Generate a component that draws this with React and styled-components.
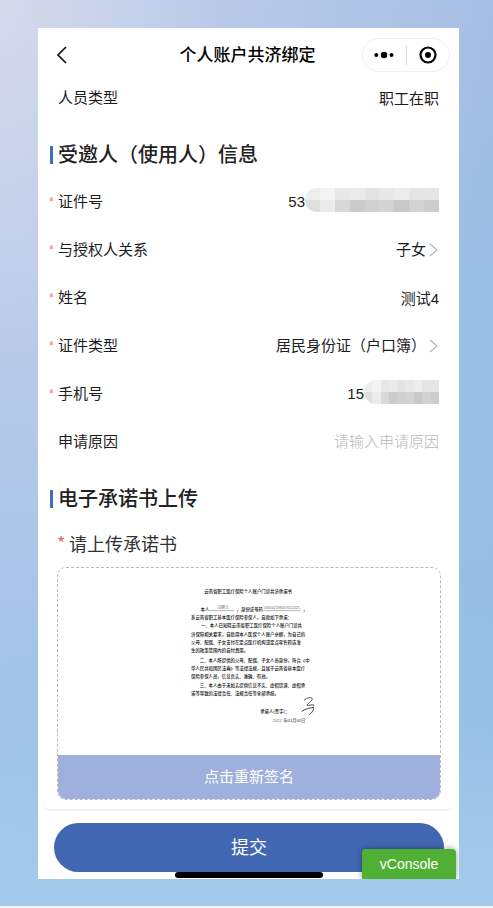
import { useState } from 'react';
import styled, { createGlobalStyle } from 'styled-components';

const GlobalStyle = createGlobalStyle`
  * {
    box-sizing: border-box;
  }

  body {
    margin: 0;
    font-family: "Liberation Sans", "Noto Sans CJK SC", sans-serif;
    color: #1c1c1c;
  }

  button, input, select {
    font-family: inherit;
    color: inherit;
    border: none;
    margin: 0;
    padding: 0;
    background: none;
  }
`;

const Page = styled.main`
  padding: 28px 34px 27px 38px;
  border-bottom: 2px solid #edf5fb;
  background:
    radial-gradient(ellipse 100% 95% at top left, rgba(217, 220, 236, 0.95), rgba(190, 204, 234, 0.8) 45%, rgba(180, 200, 232, 0)),
    linear-gradient(180deg, #a6bfe3 0%, #98bee5 40%, #96bfe6 75%, #a4cbeb 100%);
`;

const Phone = styled.div`
  position: relative;
  background: #fff;
  overflow: hidden;
`;

const Header = styled.header`
  display: grid;
  grid-template-columns: 80px 1fr 88px;
  align-items: center;
  height: 46px;
  padding: 8px 9px 0 15px;
`;

const BackButton = styled.button`
  display: flex;
  width: 24px;
  height: 24px;
  align-items: center;
`;

const Title = styled.h1`
  margin: 0;
  padding-top: 2px;
  font-size: 17px;
  line-height: 24px;
  font-weight: 500;
  text-align: center;
  white-space: nowrap;
  color: #000;
`;

const Capsule = styled.div`
  display: flex;
  align-items: center;
  height: 34px;
  border: 1px solid #f0f0f0;
  border-radius: 17px;
`;

const CapsuleButton = styled.button`
  display: flex;
  flex: 1;
  height: 20px;
  align-items: center;
  justify-content: center;

  & + & {
    border-left: 1px solid #dcdcdc;
  }
`;

const Card = styled.form`
  margin: 0 4px;
  padding: 0 16px 9px 7px;
  border-radius: 0 0 8px 8px;
  box-shadow: 0 3px 3px -2px rgba(0, 0, 0, 0.1);
`;

const Row = styled.div`
  display: flex;
  align-items: center;
  height: 48px;
  font-size: 15px;
  line-height: 20px;
`;

const Star = styled.span`
  flex: none;
  width: ${(props) => (props.$large ? '11px' : '9px')};
  font-size: ${(props) => (props.$large ? '16px' : '12px')};
  line-height: 18px;
  color: ${(props) => (props.$large ? '#d05a50' : '#dc8585')};
`;

const Label = styled.label`
  flex: none;
  white-space: nowrap;
`;

const ValueInput = styled.input`
  flex: 1;
  min-width: 0;
  height: 26px;
  padding-bottom: 2px;
  font-size: 15px;
  text-align: right;
  outline: none;

  &::placeholder {
    color: #b8b8b8;
    font-weight: 300;
    opacity: 1;
  }
`;

const ValueSelect = styled.select`
  flex: 1;
  min-width: 0;
  height: 26px;
  padding-bottom: 2px;
  font-size: 15px;
  text-align-last: right;
  appearance: none;
  outline: none;
`;

const SectionTitle = styled.h2`
  display: flex;
  align-items: center;
  height: 56px;
  margin: 0;
  padding: 10px 0 0 1px;
  font-size: 20px;
  line-height: 28px;
  font-weight: 500;
  color: #222;

  &::before {
    content: '';
    width: 3px;
    height: 18px;
    margin-right: 5px;
    background: #3f70bb;
  }
`;

const UploadLabel = styled.div`
  display: flex;
  align-items: center;
  height: 45px;
  padding: 0 0 3px 9px;
  font-size: 18px;
  color: #333;
`;

const UploadBox = styled.div`
  display: flex;
  flex-direction: column;
  height: 233px;
  margin: 0 -2px 0 8px;
  border: 1px dashed #b9b9c2;
  border-radius: 9px;
  overflow: hidden;
`;

const Preview = styled.div`
  flex: 1;
  display: flex;
  justify-content: center;
  padding-top: 15px;
`;

const ResignButton = styled.button`
  height: 44px;
  padding-bottom: 3px;
  background: #9fb0dc;
  color: #fff;
  font-size: 15px;
`;

const Footer = styled.footer`
  padding: 14px 15px 1px 16px;
`;

const SubmitButton = styled.button`
  display: block;
  width: 100%;
  height: 49px;
  padding-bottom: 3px;
  border-radius: 25px;
  background: #4267b2;
  color: #fff;
  font-size: 18px;
`;

const HomeBar = styled.div`
  width: 148px;
  height: 6px;
  margin: 0 auto;
  border-radius: 3px;
  background: #000;
`;

/* Floating debug switch, sits over the footer */
const ConsoleButton = styled.button`
  position: absolute;
  right: 3px;
  bottom: 0;
  width: 94px;
  height: 30px;
  border-radius: 4px 4px 0 0;
  background: #50b036;
  box-shadow: 0 0 6px rgba(0, 0, 0, 0.4);
  color: #fff;
  font-size: 14px;
`;

const Arrow = () => (
  <svg width="13" height="16" viewBox="0 0 13 16" fill="none" stroke="#b5b5b5" strokeWidth="1.2" aria-hidden="true">
    <path d="M4 2l7 6-7 6" />
  </svg>
);

const MASK_TOP = ['#ededed', '#f3f3f3', '#e8e8e8', '#ebebeb', '#e3e3e3', '#e8e8e8', '#ececec', '#e4e4e4', '#e6e6e6'];
const MASK_BOTTOM = ['#dedede', '#ebebeb', '#d8d8d8', '#cbcbcb', '#d0d0d0', '#d3d3d3', '#c9c9c9', '#d2d2d2', '#cdcdcd'];

const Mask = ({ id, width }) => {
  const step = width / MASK_TOP.length;
  return (
    <svg width={width} height="28" viewBox={`0 0 ${width} 28`} aria-hidden="true">
      <clipPath id={id}>
        <path d={`M12 0h${width - 12}v24H12A12 12 0 0 1 12 0z`} />
      </clipPath>
      <g clipPath={`url(#${id})`} shapeRendering="crispEdges">
        {MASK_TOP.map((color, i) => (
          <g key={i}>
            <rect x={i * step} y="0" width={step + 1} height="12" fill={color} />
            <rect x={i * step} y="12" width={step + 1} height="12" fill={MASK_BOTTOM[i]} />
          </g>
        ))}
      </g>
    </svg>
  );
};

// [x, y, text]
const LETTER = [
  [66, 51, '云南省职工医疗保险个人账户门诊共济承诺书'],
  [48, 139, '本人'],
  [228, 139, '，身份证号码'],
  [560, 139, '，'],
  [0, 181, '系云南省职工基本医疗保险参保人，自愿如下承诺：'],
  [50, 219, '一、本人已知晓云南省职工医疗保险个人账户门诊共'],
  [0, 263, '济保障相关要求，自愿用本人医保个人账户余额，为自己的'],
  [0, 304, '父母、配偶、子女支付在定点医疗机构或定点零售药店发'],
  [0, 346, '生的政策范围内的自付费用。'],
  [44, 394, '二、本人所提供的父母、配偶、子女人员身份，符合《中'],
  [0, 434, '华人民共和国民法典》等法律法规，且属于云南省基本医疗'],
  [0, 476, '保险参保人员，信息真实、准确、有效。'],
  [44, 520, '三、本人由于未如实提供信息不实、虚假错误、虚假承'],
  [0, 562, '诺等导致的法律责任、法规责任等全部承担。'],
  [346, 650, '承诺人(签字)：'],
];

const Letter = () => (
  <svg width="130" height="145" viewBox="-35 0 650 725" fill="#111" fontSize="22">
    <g fontWeight="500">
      {LETTER.map(([x, y, text]) => (
        <text key={y + '-' + x} x={x} y={y}>{text}</text>
      ))}
    </g>
    <g fontSize="20" fill="#666">
      <text x="130" y="131">马晓兰</text>
      <text x="364" y="131" fontSize="18">530102198207012221</text>
      <text x="408" y="694">2022</text>
      <text x="462" y="694" fill="#111" fontSize="21">年01月01日</text>
    </g>
    <g fill="none" stroke="#888" strokeWidth="3">
      <path d="M94 138h122M362 138h186" />
      <path
        stroke="#444"
        strokeWidth="5"
        d="M566 586c14-12 32-18 40-8 3 8-16 20-26 32-4 8 22-4 34 0 6 14-8 42-24 48M554 642c16-12 38-18 64-20"
      />
    </g>
  </svg>
);

export default function App() {
  const [reason, setReason] = useState('');

  return (
    <>
      <GlobalStyle />
      <Page>
        <Phone>
          <Header>
            <BackButton type="button" aria-label="返回">
              <svg width="16" height="18" viewBox="0 0 16 18" fill="none" stroke="#111" strokeWidth="1.7">
                <path d="M13 1L5 9l8 8" />
              </svg>
            </BackButton>
            <Title>个人账户共济绑定</Title>
            <Capsule>
              <CapsuleButton type="button" aria-label="更多">
                <svg width="20" height="8" viewBox="0 0 20 8">
                  <circle cx="2.3" cy="4" r="2" />
                  <circle cx="10" cy="4" r="3.2" />
                  <circle cx="17.5" cy="4" r="2" />
                </svg>
              </CapsuleButton>
              <CapsuleButton type="button" aria-label="关闭">
                <svg width="18" height="18" viewBox="0 0 18 18">
                  <circle cx="9" cy="9" r="7.5" fill="none" stroke="#000" strokeWidth="2.2" />
                  <circle cx="9" cy="9" r="3" />
                </svg>
              </CapsuleButton>
            </Capsule>
          </Header>

          <Card id="bind">
            <Row>
              <Star />
              <Label htmlFor="person">人员类型</Label>
              <ValueInput id="person" defaultValue="职工在职" />
            </Row>

            <SectionTitle>受邀人（使用人）信息</SectionTitle>
            <Row>
              <Star>*</Star>
              <Label htmlFor="idno">证件号</Label>
              <ValueInput id="idno" defaultValue="53" />
              <Mask id="maskId" width={134} />
            </Row>
            <Row>
              <Star>*</Star>
              <Label htmlFor="relation">与授权人关系</Label>
              <ValueSelect id="relation">
                <option>子女</option>
              </ValueSelect>
              <Arrow />
            </Row>
            <Row>
              <Star>*</Star>
              <Label htmlFor="name">姓名</Label>
              <ValueInput id="name" defaultValue="测试4" />
            </Row>
            <Row>
              <Star>*</Star>
              <Label htmlFor="idtype">证件类型</Label>
              <ValueSelect id="idtype">
                <option>居民身份证（户口簿）</option>
              </ValueSelect>
              <Arrow />
            </Row>
            <Row>
              <Star>*</Star>
              <Label htmlFor="phone">手机号</Label>
              <ValueInput id="phone" defaultValue="15" />
              <Mask id="maskPhone" width={75} />
            </Row>
            <Row>
              <Star />
              <Label htmlFor="reason">申请原因</Label>
              <ValueInput
                id="reason"
                placeholder="请输入申请原因"
                value={reason}
                onChange={(e) => setReason(e.target.value)}
              />
            </Row>

            <SectionTitle>电子承诺书上传</SectionTitle>
            <UploadLabel>
              <Star $large>*</Star>
              请上传承诺书
            </UploadLabel>
            <UploadBox>
              <Preview>
                <Letter />
              </Preview>
              <ResignButton type="button">点击重新签名</ResignButton>
            </UploadBox>
          </Card>

          <Footer>
            <SubmitButton type="submit" form="bind">提交</SubmitButton>
            <HomeBar />
          </Footer>
          <ConsoleButton type="button">vConsole</ConsoleButton>
        </Phone>
      </Page>
    </>
  );
}
